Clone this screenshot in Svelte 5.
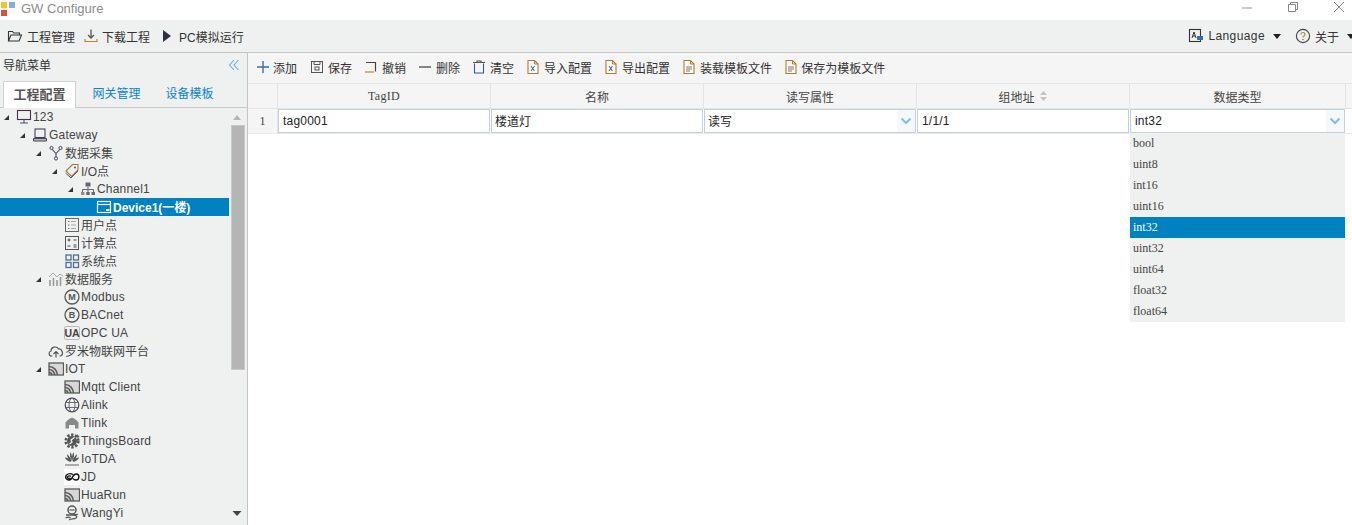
<script>
  const icons = {
    folder: '<path d="M1.500 13V3.500h4l1.200 1.500h5.800v2M1.500 13l2.500-6h10.500l-2.500 6z" fill="none" stroke="#333" stroke-width="1.100"/>',
    download: '<path d="M8 1.500v8M5 7l3 3 3-3" fill="none" stroke="#555" stroke-width="1.300"/><path d="M2 11v2.500h12V11" fill="none" stroke="#b9862f" stroke-width="1.200"/>',
    play: '<path d="M4 2l8 6-8 6z" fill="#2b3340"/>',
    language: '<rect x="1.500" y="1.500" width="11" height="12" fill="none" stroke="#333" stroke-width="1.100"/><path d="M4 10l2-6 2 6M5 8h2" fill="none" stroke="#333"/><rect x="9" y="8" width="6" height="4" fill="#3b6ea5"/>',
    help: '<circle cx="8" cy="8" r="6.600" fill="none" stroke="#444" stroke-width="1.100"/><path d="M6 6.400c0-2.600 4-2.600 4 0 0 1.600-2 1.600-2 3.200" fill="none" stroke="#b9862f" stroke-width="1.100"/><rect x="7.500" y="11" width="1" height="1.200" fill="#444"/>',
    plus: '<path d="M8 2v12M2 8h12" stroke="#3a6ea5" stroke-width="1.400"/>',
    save: '<rect x="2.500" y="2.500" width="11" height="11" fill="none" stroke="#555"/><path d="M5 2.500v3h6v-3" fill="none" stroke="#555"/><rect x="6" y="8" width="4" height="3" fill="none" stroke="#555"/>',
    undo: '<path d="M3 3.500h9.500v9" fill="none" stroke="#444" stroke-width="1.200"/><path d="M2 13h9" stroke="#b9862f" stroke-width="1.200"/>',
    minus: '<path d="M2 8h12" stroke="#555" stroke-width="1.400"/>',
    trash: '<path d="M3.500 4.500v9.500h9V4.500" fill="none" stroke="#3a5a7a" stroke-width="1.100"/><path d="M2 3.500h12M6 3.500V2h4v1.500" fill="none" stroke="#555" stroke-width="1.100"/>',
    xfile: '<path d="M3 1.500h6.500l3.500 3.500v9.500H3z" fill="#fff" stroke="#b9762f" stroke-width="1.100"/><path d="M9.500 1.500V5H13" fill="none" stroke="#b9762f"/><path d="M6 7l3.500 5M9.500 7L6 12" stroke="#4a6a8a" stroke-width="1.100"/>',
    tfile: '<path d="M3 1.500h6.500l3.500 3.500v9.500H3z" fill="#fff" stroke="#b9762f" stroke-width="1.100"/><path d="M9.500 1.500V5H13" fill="none" stroke="#b9762f"/><path d="M5 8h6M5 10h6M5 12h4" stroke="#777"/>',
    monitor: '<rect x="1.500" y="1.500" width="13" height="9" fill="none" stroke="#4a3040" stroke-width="1.100"/><path d="M8 10.500v3M4 14h8" stroke="#4a5060" stroke-width="1.100"/>',
    laptop: '<rect x="3" y="2" width="10" height="8.500" fill="none" stroke="#445" stroke-width="1.100"/><path d="M1.500 11.500h13V14h-13z" fill="#bbb" stroke="#445"/>',
    fork: '<circle cx="3.500" cy="3" r="1.600" fill="none" stroke="#445"/><circle cx="12.500" cy="3" r="1.600" fill="none" stroke="#445"/><circle cx="8" cy="13.500" r="1.600" fill="none" stroke="#445"/><path d="M4.300 4.500L8 8.500l3.700-4M8 8.500v3.500" fill="none" stroke="#445" stroke-width="1.100"/>',
    tag: '<path d="M2 8l6.500-6.500h5.500v5.500L7.500 13.500z" fill="none" stroke="#a9752f" stroke-width="1.100"/><path d="M1.500 10L7 15l7-7" fill="none" stroke="#557" stroke-width="1"/><circle cx="11" cy="4.500" r="1" fill="#557"/>',
    sitemap: '<rect x="5.500" y="1.500" width="5" height="4" fill="#667"/><path d="M8 5.500v3M2.500 11V8.500h11V11M8 8.500V11" fill="none" stroke="#667"/><rect x="1" y="11" width="3.500" height="3" fill="#a87"/><rect x="6.250" y="11" width="3.500" height="3" fill="#667"/><rect x="11.500" y="11" width="3.500" height="3" fill="#667"/>',
    device: '<rect x="1.500" y="2.500" width="13" height="11" fill="none" stroke="#fff" stroke-width="1.200"/><path d="M1.500 5.500h13" stroke="#fff" stroke-width="1.200"/><rect x="10" y="10" width="3.500" height="2" fill="#fff"/>',
    user: '<rect x="1.500" y="1.500" width="13" height="13" fill="none" stroke="#666"/><path d="M4 4.500h1.500M4 8h1.500M4 11.500h1.500" stroke="#777"/><path d="M7 4.500h5M7 8h5M7 11.500h5" stroke="#a8a8a8"/>',
    calc: '<rect x="1.500" y="1.500" width="13" height="13" fill="none" stroke="#555"/><path d="M3.500 5h3M5 3.500v3M9.500 5h3M3.500 11h3M9.500 10h3M9.500 12h3" stroke="#445"/>',
    system: '<rect x="2" y="2" width="5" height="5" fill="none" stroke="#4f6f93" stroke-width="1.300"/><rect x="9.500" y="2" width="5" height="5" fill="none" stroke="#4f6f93" stroke-width="1.300"/><rect x="2" y="9.500" width="5" height="5" fill="none" stroke="#4f6f93" stroke-width="1.300"/><rect x="9.500" y="9.500" width="5" height="5" fill="none" stroke="#4f6f93" stroke-width="1.300"/>',
    chart: '<path d="M2 15V9M5.500 15V7M9 15V9M12.500 15V6" stroke="#999" stroke-width="1.600"/><path d="M1 6l4-4 4 4 3-3 3 2" fill="none" stroke="#aaa"/>',
    modbus: '<circle cx="8" cy="8" r="7" fill="none" stroke="#555" stroke-width="1.300"/><text x="8" y="11.200" font-size="9" font-weight="700" text-anchor="middle" fill="#555" font-family="Liberation Sans">M</text>',
    bacnet: '<circle cx="8" cy="8" r="7" fill="none" stroke="#555" stroke-width="1.300"/><text x="8" y="11.200" font-size="9" font-weight="700" text-anchor="middle" fill="#555" font-family="Liberation Sans">B</text>',
    ua: '<rect x="0.500" y="1.500" width="15" height="13" rx="1.500" fill="none" stroke="#bbb"/><text x="8" y="12" font-size="10.500" font-weight="700" text-anchor="middle" fill="#444" font-family="Liberation Sans">UA</text>',
    cloud: '<path d="M4.500 13H3.500C.5 13 .5 8.500 3 8c0-4 5.500-5.500 7.500-2 3-1 6 5.500 2 7h-1" fill="none" stroke="#555" stroke-width="1.200"/><path d="M8 14.500V8.500M5.500 11L8 8.500l2.500 2.500" fill="none" stroke="#555" stroke-width="1.200"/>',
    cast: '<rect x="1" y="2" width="14.500" height="12" fill="#d8d8d8" stroke="#5a5a5a" stroke-width="1.300"/><path d="M1 5.500c4.500 0 8 3.500 8.500 8.500M1 8.500c3 0 5.500 2.500 5.800 5.500M1 11.500c1.500 0 2.800 1.200 3 2.500" fill="none" stroke="#5a5a5a" stroke-width="1.500"/>',
    globe: '<circle cx="8" cy="8" r="6.800" fill="none" stroke="#445" stroke-width="1.200"/><ellipse cx="8" cy="8" rx="3" ry="6.800" fill="none" stroke="#667"/><path d="M1.500 5.500h13M1.500 10.500h13" stroke="#667"/>',
    tlink: '<path d="M1.500 13.500V7.500C3 5 5 4 8 2.500 11 4 13 5 14.500 7.500v6H11V10H5v3.500z" fill="#888"/>',
    tb: '<circle cx="8" cy="8" r="5" fill="#555"/><circle cx="8" cy="8" r="6.300" fill="none" stroke="#555" stroke-width="2.600" stroke-dasharray="2.400 1.600"/><path d="M13 1l2.500 2.500-2 2z" fill="#555"/><path d="M5.500 11L8 9 7 7l3.500-2.500" fill="none" stroke="#eee" stroke-width="1.300"/>',
    huawei: '<path d="M8 10C6 7 5.500 4 6.500 1 8 4 8.500 7 8 10zM8 10c2-3 2.500-6 1.500-9C8 4 7.500 7 8 10zM7.500 10.500C5 9 3 6.500 3 3c2 1.500 4 4.500 4.500 7.500zM8.500 10.500C11 9 13 6.500 13 3c-2 1.500-4 4.500-4.500 7.500zM7 11C4.500 10.500 2 9 .8 6.500c2.700 0 5.200 2 6.200 4.500zM9 11c2.500-.5 5-2 6.200-4.500-2.700 0-5.200 2-6.200 4.500z" fill="#555"/><rect x="1" y="13" width="14" height="2" fill="#aaa"/>',
    jd: '<rect width="16" height="16" fill="#fff"/><path d="M9 5.500C7.500 4.500 4.500 4 2.500 6c-2 2.500 0 5 2.500 5s3-1.500 3.500-3c.5-1 2-3 4-3 3 0 3.500 6-.5 6-1.500 0-2.500-.5-3-1.500M7 7.500C6 6.800 4 6.500 3.500 8c-.3 1.500 2 2 3 1" fill="none" stroke="#111" stroke-width="1.400"/>',
    wangyi: '<circle cx="8" cy="5" r="4" fill="none" stroke="#555" stroke-width="1.500"/><path d="M5.500 5h5" stroke="#555" stroke-width="1.200"/><path d="M2 10h7c3 0 5 1 3 3-2 1.500-5 0-7 2M1.500 13c2-1 4-1 5 0M9 9.500c2 .5 4 0 5-.5" fill="none" stroke="#555" stroke-width="1.300"/>'
  };

  const topLeft = [
    { icon: 'folder', label: '工程管理', cls: 'm0' },
    { icon: 'download', label: '下载工程', cls: 'm1' },
    { icon: 'play', label: 'PC模拟运行', cls: 'm2' }
  ];

  const tools = [
    { icon: 'plus', label: '添加' },
    { icon: 'save', label: '保存' },
    { icon: 'undo', label: '撤销' },
    { icon: 'minus', label: '删除' },
    { icon: 'trash', label: '清空' },
    { icon: 'xfile', label: '导入配置' },
    { icon: 'xfile', label: '导出配置' },
    { icon: 'tfile', label: '装载模板文件' },
    { icon: 'tfile', label: '保存为模板文件' }
  ];

  const tree = [
    { l: 0, a: 1, i: 'monitor', t: '123' },
    { l: 1, a: 1, i: 'laptop', t: 'Gateway' },
    { l: 2, a: 1, i: 'fork', t: '数据采集' },
    { l: 3, a: 1, i: 'tag', t: 'I/O点' },
    { l: 4, a: 1, i: 'sitemap', t: 'Channel1' },
    { l: 5, a: 0, i: 'device', t: 'Device1(一楼)', sel: true },
    { l: 3, a: 0, i: 'user', t: '用户点' },
    { l: 3, a: 0, i: 'calc', t: '计算点' },
    { l: 3, a: 0, i: 'system', t: '系统点' },
    { l: 2, a: 1, i: 'chart', t: '数据服务' },
    { l: 3, a: 0, i: 'modbus', t: 'Modbus' },
    { l: 3, a: 0, i: 'bacnet', t: 'BACnet' },
    { l: 3, a: 0, i: 'ua', t: 'OPC UA' },
    { l: 2, a: 0, i: 'cloud', t: '罗米物联网平台' },
    { l: 2, a: 1, i: 'cast', t: 'IOT' },
    { l: 3, a: 0, i: 'cast', t: 'Mqtt Client' },
    { l: 3, a: 0, i: 'globe', t: 'Alink' },
    { l: 3, a: 0, i: 'tlink', t: 'Tlink' },
    { l: 3, a: 0, i: 'tb', t: 'ThingsBoard' },
    { l: 3, a: 0, i: 'huawei', t: 'IoTDA' },
    { l: 3, a: 0, i: 'jd', t: 'JD' },
    { l: 3, a: 0, i: 'cast', t: 'HuaRun' },
    { l: 3, a: 0, i: 'wangyi', t: 'WangYi' }
  ];

  const isLatin = (s) => /^[\x00-\x7f]+$/.test(s);
  const hasCjk = (s) => /[\u4e00-\u9fff]/.test(s);

  const columns = [
    { t: 'TagID', w: 213, serif: true },
    { t: '名称', w: 213 },
    { t: '读写属性', w: 213 },
    { t: '组地址', w: 213, sort: true },
    { t: '数据类型', w: 216 }
  ];

  const cells = [
    { v: 'tag0001', w: 213 },
    { v: '楼道灯', w: 213 },
    { v: '读写', w: 213, combo: true },
    { v: '1/1/1', w: 213 },
    { v: 'int32', w: 216, combo: true, open: true }
  ];

  const types = ['bool', 'uint8', 'int16', 'uint16', 'int32', 'uint32', 'uint64', 'float32', 'float64'];
</script>

{#snippet icon(name, size = 16)}
  <svg class="ico" width={size} height={size} viewBox="0 0 16 16">{@html icons[name]}</svg>
{/snippet}

<div class="app">
  <header class="titlebar">
    <div class="logo"><i class="y"></i><i class="b"></i><i class="r"></i></div>
    <span class="title">GW Configure</span>
    <div class="winbtns">
      <svg width="12" height="12" viewBox="0 0 12 12"><path d="M1 7h10" stroke="#999"/></svg>
      <svg width="12" height="12" viewBox="0 0 12 12"><path d="M1.500 3.500h7v7h-7zM3.500 3.500v-2h7v7h-2" fill="none" stroke="#888"/></svg>
      <svg width="12" height="12" viewBox="0 0 12 12"><path d="M1 1l10 10M11 1L1 11" stroke="#888"/></svg>
    </div>
  </header>

  <nav class="menubar">
    <div class="menu-left">
      {#each topLeft as m}
        <div class="mitem {m.cls}">{@render icon(m.icon, 16)}<span>{m.label}</span></div>
      {/each}
    </div>
    <div class="menu-right">
      <div class="mitem lang">{@render icon('language', 16)}<span class="ls">Language</span><b class="caret"></b></div>
      <div class="mitem about">{@render icon('help', 16)}<span>关于</span><b class="caret"></b></div>
    </div>
  </nav>

  <div class="body">
    <aside class="side">
      <div class="side-title">
        <span>导航菜单</span>
        <svg width="12" height="12" viewBox="0 0 12 12"><path d="M6 1L1.500 6 6 11M10.500 1L6 6l4.500 5" fill="none" stroke="#64ace8" stroke-width="1.100"/></svg>
      </div>
      <div class="tabs">
        <div class="tab active">工程配置</div>
        <div class="tab">网关管理</div>
        <div class="tab">设备模板</div>
      </div>
      <div class="tree-wrap">
        <div class="tree">
          {#each tree as n}
            <div class="node" class:sel={n.sel} style="padding-left:{n.l * 16}px">
              <span class="arrow">{#if n.a}<svg width="7" height="7" viewBox="0 0 7 7"><path d="M6 1v5H1z" fill="#333"/></svg>{/if}</span>
              {@render icon(n.i, 16)}
              <span class="label" class:latin={isLatin(n.t)} class:cjk={hasCjk(n.t)}>{n.t}</span>
            </div>
          {/each}
        </div>
        <div class="scroll">
          <svg class="sarrow" width="12" height="6" viewBox="0 0 12 6"><path d="M2 6l4-5 4 5z" fill="#b5b5b5"/></svg>
          <div class="thumb"></div>
          <svg class="sarrow down" width="12" height="6" viewBox="0 0 12 6"><path d="M1.500 0h9L6 5z" fill="#444"/></svg>
        </div>
      </div>
    </aside>

    <main class="main">
      <div class="toolbar">
        {#each tools as t}
          <div class="tool">{@render icon(t.icon, 16)}<span>{t.label}</span></div>
        {/each}
      </div>
      <div class="grid">
        <div class="ghead">
          <div class="rownum"></div>
          {#each columns as c}
            <div class="hcell" class:serif={c.serif} style="width:{c.w}px">
              {c.t}
              {#if c.sort}
                <svg class="sort" width="9" height="12" viewBox="0 0 9 12"><path d="M4.500 1L8 5H1zM4.500 11L1 7h7z" fill="#c4c4c4"/></svg>
              {/if}
            </div>
          {/each}
        </div>
        <div class="grow">
          <div class="rownum num">1</div>
          {#each cells as c}
            <div class="cell" style="width:{c.w}px">
              <div class="edit">
                <span class:latin={isLatin(c.v)} class:cjk={hasCjk(c.v)}>{c.v}</span>
                {#if c.combo}
                  <span class="drop"><svg width="12" height="8" viewBox="0 0 12 8"><path d="M1.500 1.500L6 6l4.500-4.500" fill="none" stroke="#7dbdf0" stroke-width="2"/></svg></span>
                {/if}
              </div>
              {#if c.open}
                <ul class="list">
                  {#each types as ty}
                    <li class:on={ty === c.v}>{ty}</li>
                  {/each}
                </ul>
              {/if}
            </div>
          {/each}
        </div>
      </div>
    </main>
  </div>
</div>

<style>
  :global(body) { margin: 0; background: #fff; }
  .app {
    width: 1352px; height: 525px; overflow: hidden; display: flex; flex-direction: column;
    font-family: "Liberation Sans", "Noto Sans CJK SC", sans-serif; font-size: 12px; color: #444;
  }
  .ico { flex: none; display: block; }

  .titlebar { height: 20px; flex: none; display: flex; align-items: center; background: #fff; position: relative; }
  .logo { width: 15px; height: 15px; margin: -2px 0 0 1px; display: grid; grid-template-columns: 6px 6px; grid-template-rows: 6px 6px; gap: 2px; }
  .logo i { display: block; }
  .logo .y { background: #f3c230; }
  .logo .b { background: #7fb0e2; }
  .logo .r { background: #d9523f; }
  .title { margin-left: 5px; font-size: 13px; color: #8c8c8c; margin-top: -3px; }
  .winbtns { margin-left: auto; display: flex; gap: 34px; padding-right: 7px; margin-top: -6px; }

  .menubar { height: 33px; flex: none; box-sizing: border-box; background: #eff1f1; border-bottom: 1px solid #c4c4c4; display: flex; align-items: center; justify-content: space-between; }
  .menu-left, .menu-right { display: flex; align-items: center; }
  .menu-left { padding-left: 7px; }
  .mitem { display: flex; align-items: center; gap: 4px; color: #333; }
  .m1 { margin-left: 8px; gap: 3px; }
  .m2 { margin-left: 9px; gap: 4px; }
  .menu-right { margin-right: -3px; }
  .lang { gap: 4px; }
  .ls { letter-spacing: .4px; }
  .about { margin-left: 14px; gap: 4px; }
  .caret { display: inline-block; width: 0; height: 0; margin-left: 4px; border-left: 4.500px solid transparent; border-right: 4.500px solid transparent; border-top: 5px solid #222; }

  .body { flex: 1; display: flex; min-height: 0; }
  .side { width: 248px; flex: none; box-sizing: border-box; background: #eff1f1; border-right: 1px solid #c4c4c4; display: flex; flex-direction: column; overflow: hidden; }
  .side-title { height: 27px; flex: none; box-sizing: border-box; display: flex; align-items: center; justify-content: space-between; padding: 0 7px 4px 3px; color: #333; }
  .tabs { height: 28px; flex: none; box-sizing: border-box; padding-top: 1px; border-bottom: 1px solid #c8c8c8; display: flex; padding-left: 3px; }
  .tab { width: 73px; text-align: center; line-height: 27px; font-size: 12px; color: #0a84cc; }
  .tab.active { box-sizing: border-box; height: 27px; line-height: 26px; margin-right: 4px; background: #fff; border: 1px solid #d0d0d0; border-bottom: none; color: #555; font-size: 13px; font-weight: 700; }

  .tree-wrap { flex: 1; display: flex; min-height: 0; }
  .tree { width: 229px; flex: none; }
  .node { height: 18px; display: flex; align-items: center; box-sizing: border-box; color: #444; }
  .arrow { width: 16px; flex: none; display: flex; align-items: center; padding-left: 3px; box-sizing: border-box; margin-top: 1px; }
  .label { margin-left: 1px; white-space: nowrap; }
  .label.cjk { margin-bottom: 2px; }
  .latin { letter-spacing: .2px; }
  .edit .cjk { margin-bottom: 2px; margin-left: -1px; }
  .node.sel { background: #0081c2; color: #fff; font-weight: 700; }

  .scroll { width: 17px; margin-left: 1px; position: relative; display: flex; flex-direction: column; align-items: center; }
  .sarrow { position: absolute; left: 1px; top: 6px; }
  .sarrow.down { top: 403px; }
  .thumb { position: absolute; left: 1px; top: 17px; width: 14px; height: 245px; box-sizing: border-box; background: #b5b5b5; border: 1px solid #c8c8c8; }

  .main { flex: 1; min-width: 0; background: #fff; display: flex; flex-direction: column; }
  .toolbar { height: 31px; flex: none; box-sizing: border-box; background: #f5f5f5; border-bottom: 1px solid #e6e6e6; display: flex; align-items: center; padding: 0 0 2px 7px; gap: 11px; color: #333; }
  .tool { display: flex; align-items: center; gap: 3px; }
  .tool:first-child { gap: 2px; margin-right: 1px; }
  .tool:last-child { gap: 2px; }

  .ghead { display: flex; height: 25px; box-sizing: border-box; background: #f5f5f5; border-bottom: 1px solid #e4e4e4; }
  .rownum { width: 30px; flex: none; box-sizing: border-box; border-right: 1px solid #e4e4e4; }
  .hcell { flex: none; box-sizing: border-box; border-right: 1px solid #e4e4e4; display: flex; align-items: center; justify-content: center; gap: 4px; color: #444; }
  .serif { font-family: "Liberation Serif", serif; letter-spacing: .3px; }
  .grow { display: flex; height: 25px; box-sizing: border-box; border-bottom: 1px solid #e8e8e8; }
  .num { background: #f5f5f5; text-align: center; line-height: 24px; font-family: "Liberation Serif", serif; color: #444; }
  .cell { flex: none; position: relative; box-sizing: border-box; padding-right: 1px; }
  .edit { box-sizing: border-box; height: 24px; border: 1px solid #c5d0e0; background: #fff; display: flex; align-items: center; padding-left: 4px; color: #222; position: relative; }
  .drop { position: absolute; right: 0; top: 0; bottom: 0; width: 18px; background: #f5f8fa; display: flex; align-items: center; justify-content: center; }
  .list { position: absolute; left: 0; top: 24px; width: 215px; margin: 0; padding: 0; list-style: none; background: #eff1f1; font-family: "Liberation Serif", serif; color: #444; z-index: 2; }
  .list li { height: 21px; line-height: 21px; padding-left: 3px; }
  .list li.on { background: #0081c2; color: #fff; }
</style>
